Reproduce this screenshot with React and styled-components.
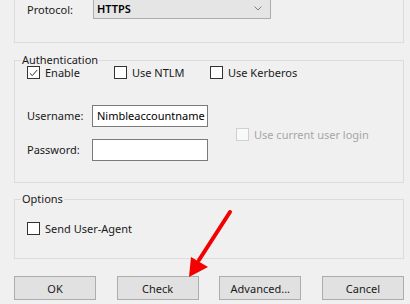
import React from 'react';
import styled, { createGlobalStyle } from 'styled-components';

const GlobalStyle = createGlobalStyle`
  html, body {
    margin: 0;
    padding: 0;
    background: #f0f0f0;
  }
  body {
    font-family: "Noto Sans", "Open Sans", sans-serif;
    font-size: 11px;
    color: #000;
    overflow: hidden;
  }
`

const Dialog = styled.div`
  position: relative;
  width: 410px;
  height: 304px;
  box-sizing: border-box;
  padding: 0 6px 0 14px;
  display: flex;
  flex-direction: column;
`

const TopGroup = styled.div`
  height: 43px;
  box-sizing: border-box;
  border: 1px solid #dcdcdc;
  border-top: none;
  padding-left: 12px;
`

const Group = styled.section`
  position: relative;
  margin-top: ${p => p.$top}px;
  padding: ${p => p.$pt}px 0 ${p => p.$pb}px 12px;
  border: 1px solid #dcdcdc;
`

const Legend = styled.span`
  position: absolute;
  top: -7px;
  left: 6px;
  padding: 0 1px;
  line-height: 12px;
  background: #f0f0f0;
  color: #1a1a1a;
`

const Row = styled.div`
  display: flex;
  align-items: center;
  margin-top: ${p => p.$top || 0}px;
`

const Label = styled.span`
  width: ${p => p.$w}px;
  flex-shrink: 0;
  white-space: nowrap;
  line-height: 16px;
  color: #1a1a1a;
`

const Combo = styled.div`
  width: 178px;
  height: 21px;
  margin-top: -2px;
  box-sizing: border-box;
  border: 1px solid #adadad;
  background: #e5e5e5;
  display: flex;
  align-items: center;
  justify-content: space-between;
  padding: 0 8px 0 3px;
  font-weight: 600;
`

const Check = styled.label`
  display: flex;
  align-items: center;
  gap: 5px;
  width: ${p => p.$w}px;
  flex-shrink: 0;
  line-height: 13px;
  white-space: nowrap;
  color: ${p => (p.$disabled ? '#a6a6a6' : '#1a1a1a')};
`

const Box = styled.span`
  width: 13px;
  height: 13px;
  box-sizing: border-box;
  border: 1px solid ${p => (p.$disabled ? '#d0d0d0' : '#333')};
  background: ${p => (p.$disabled ? '#f9f9f9' : '#fff')};
  display: flex;
  align-items: center;
  justify-content: center;
`

const Fields = styled.div`
  display: grid;
  grid-template-columns: 65px 116px;
  row-gap: 12px;
  align-items: center;
`

const Input = styled.div`
  height: 22px;
  box-sizing: border-box;
  border: 1px solid #7a7a7a;
  background: #fff;
  padding: 0 0 0 4px;
  line-height: 20px;
  white-space: nowrap;
  overflow: hidden;
`

const Aside = styled.div`
  margin-left: 28px;
  margin-top: 2px;
`

const Buttons = styled.div`
  display: flex;
  justify-content: space-between;
  margin-top: 17px;
`

const Button = styled.button`
  width: 82px;
  height: 24px;
  border: 1px solid #adadad;
  background: #e1e1e1;
  font: inherit;
  color: #1a1a1a;
  padding: 0;
`

const Arrow = styled.svg`
  position: absolute;
  left: 180px;
  top: 205px;
`

function Checkbox({ checked, disabled, label, w }) {
  return (
    <Check $w={w} $disabled={disabled}>
      <Box $disabled={disabled}>
        {checked ? (
          <svg width="9" height="8" viewBox="0 0 9 8">
            <path d="M0.8 4.2 L3.3 6.6 L8.2 1" fill="none" stroke="#333" strokeWidth="1" />
          </svg>
        ) : null}
      </Box>
      {label}
    </Check>
  );
}

export default function App() {
  return (
    <>
      <GlobalStyle />
      <Dialog>
        <TopGroup>
          <Row>
            <Label $w={66}>Protocol:</Label>
            <Combo>
              <span>HTTPS</span>
              <svg width="8" height="5" viewBox="0 0 8 5">
                <path d="M0.5 0.5 L4 4 L7.5 0.5" fill="none" stroke="#808080" strokeWidth="1" />
              </svg>
            </Combo>
          </Row>
        </TopGroup>

        <Group $top={17} $pt={5} $pb={21}>
          <Legend>Authentication</Legend>
          <Row>
            <Checkbox checked w={87} label="Enable" />
            <Checkbox w={96} label="Use NTLM" />
            <Checkbox label="Use Kerberos" />
          </Row>
          <Row $top={26}>
            <Fields>
              <Label>Username:</Label>
              <Input>Nimbleaccountname</Input>
              <Label>Password:</Label>
              <Input />
            </Fields>
            <Aside>
              <Checkbox disabled label="Use current user login" />
            </Aside>
          </Row>
        </Group>

        <Group $top={16} $pt={22} $pb={23}>
          <Legend>Options</Legend>
          <Row>
            <Checkbox label="Send User-Agent" />
          </Row>
        </Group>

        <Buttons>
          <Button>OK</Button>
          <Button>Check</Button>
          <Button>Advanced...</Button>
          <Button>Cancel</Button>
        </Buttons>

        <Arrow width="60" height="80" viewBox="0 0 60 80">
          <line x1="50" y1="7" x2="19" y2="55" stroke="#f40000" strokeWidth="4" strokeLinecap="round" />
          <polygon points="9,72 11,52 28,62" fill="#f40000" />
        </Arrow>
      </Dialog>
    </>
  );
}
